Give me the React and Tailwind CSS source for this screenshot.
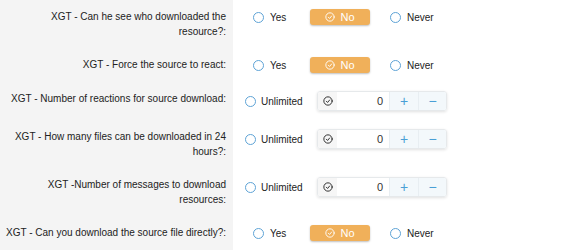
import React from "react";

function CheckCircle({ className }) {
  return (
    <svg viewBox="0 0 24 24" fill="none" stroke="currentColor" strokeWidth="2.2" strokeLinecap="round" strokeLinejoin="round" className={className}>
      <circle cx="12" cy="12" r="10" />
      <path d="m8 12.5 3 3 5-6" />
    </svg>
  );
}

function Radio() {
  return <span className="block w-[11px] h-[11px] rounded-full border border-[#5ea3d6] bg-white shrink-0" />;
}

function YesNo() {
  return (
    <div className="flex items-center h-[16px] pl-[20px]">
      <div className="flex items-center gap-[6px] w-[57px]">
        <Radio />
        <span>Yes</span>
      </div>
      <div className="flex items-center justify-center gap-[5px] w-[60px] h-[16px] rounded-[3px] bg-[#f0b05a] text-white shadow-[0_1px_2px_rgba(0,0,0,0.25)] text-[11px]">
        <CheckCircle className="w-[10px] h-[10px]" />
        <span>No</span>
      </div>
      <div className="flex items-center gap-[6px] ml-[20px]">
        <Radio />
        <span>Never</span>
      </div>
    </div>
  );
}

function NumberCtl() {
  return (
    <div className="flex items-center pl-[12px]">
      <div className="flex items-center gap-[5px] w-[72px]">
        <Radio />
        <span>Unlimited</span>
      </div>
      <div className="flex h-[20px] w-[130px] rounded-[3px] border border-[#e6e9eb] shadow-[0_1px_3px_rgba(0,0,0,0.12)] overflow-hidden">
        <div className="w-[19px] flex items-center justify-center bg-[#f6f6f6] text-[#222]">
          <CheckCircle className="w-[10px] h-[10px]" />
        </div>
        <div className="w-[52px] flex items-center justify-end pr-[6px] bg-white text-[#333] text-[11px]">0</div>
        <div className="w-[29px] flex items-center justify-center bg-[#f3f8fb] text-[#4a9fd6] border-l border-[#e8eef2] text-[14px] leading-none">+</div>
        <div className="flex-1 flex items-center justify-center bg-[#f3f8fb] text-[#4a9fd6] border-l border-[#e8eef2] text-[14px] leading-none">−</div>
      </div>
    </div>
  );
}

const rows = [
  { label: "XGT - Can he see who downloaded the resource?:", type: "yn" },
  { label: "XGT - Force the source to react:", type: "yn" },
  { label: "XGT - Number of reactions for source download:", type: "num" },
  { label: "XGT - How many files can be downloaded in 24 hours?:", type: "num" },
  { label: "XGT -Number of messages to download resources:", type: "num" },
  { label: "XGT - Can you download the source file directly?:", type: "yn" },
];

export default function App() {
  return (
    <div className="w-[580px] h-[250px] overflow-hidden bg-white text-[10px] leading-[15px] text-[#222]" style={{ fontFamily: '"Liberation Sans", Arial, sans-serif' }}>
      <div className="grid grid-cols-[233px_1fr]">
        {rows.map((r, i) => (
          <React.Fragment key={i}>
            <div className="bg-[#f4f4f4] text-right pl-[5px] pr-[7px] py-[9px]">{r.label}</div>
            <div className="py-[9px]">{r.type === "yn" ? <YesNo /> : <NumberCtl />}</div>
          </React.Fragment>
        ))}
        <div className="bg-[#f4f4f4] h-[40px]" />
        <div />
      </div>
    </div>
  );
}
